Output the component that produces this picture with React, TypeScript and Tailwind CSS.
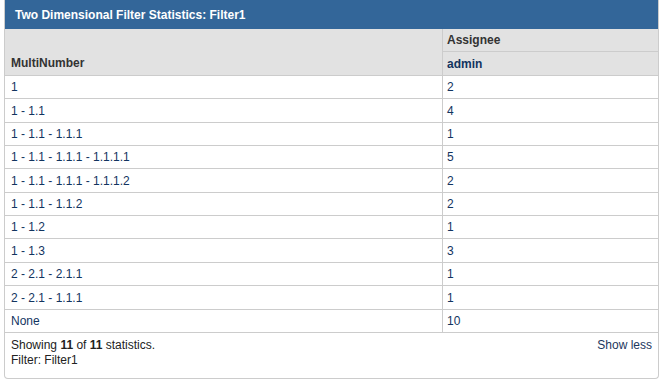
import React from 'react';

type Row = { path: string; count: number };

const rows: Row[] = [
    { path: '1', count: 2 },
    { path: '1 - 1.1', count: 4 },
    { path: '1 - 1.1 - 1.1.1', count: 1 },
    { path: '1 - 1.1 - 1.1.1 - 1.1.1.1', count: 5 },
    { path: '1 - 1.1 - 1.1.1 - 1.1.1.2', count: 2 },
    { path: '1 - 1.1 - 1.1.2', count: 2 },
    { path: '1 - 1.2', count: 1 },
    { path: '1 - 1.3', count: 3 },
    { path: '2 - 2.1 - 2.1.1', count: 1 },
    { path: '2 - 2.1 - 1.1.1', count: 1 },
    { path: 'None', count: 10 },
];

// row heights alternate so 11 rows land on the same lines as the screenshot
const rowHeights = ['h-[23px]', 'h-[24px]', 'h-[23px]', 'h-[23px]', 'h-[24px]', 'h-[23px]', 'h-[23px]', 'h-[24px]', 'h-[23px]', 'h-[24px]', 'h-[23px]'];

const App: React.FC = () => {
    return (
        <div className="w-[666px] h-[385px] bg-white pl-[4px] font-['Liberation_Sans',Arial,sans-serif] text-[12px]">
            <div className="w-[655px] h-[379px] border border-t-0 border-[#cccccc] rounded-b-[4px] flex flex-col overflow-hidden">
                {/* Title bar */}
                <div className="h-[29px] shrink-0 bg-[#336699] text-white font-bold px-[10px] flex items-center">
                    Two Dimensional Filter Statistics: Filter1
                </div>

                {/* Column headers */}
                <div className="flex bg-[#e2e2e2] text-[#333333] font-bold h-[46px] shrink-0">
                    <div className="w-[438px] flex items-end px-[6px] pb-[3px] border-r border-[#cccccc]">
                        MultiNumber
                    </div>
                    <div className="flex-1 flex flex-col">
                        <div className="h-[23px] flex items-center px-[4px] border-b border-[#cccccc]">Assignee</div>
                        <div className="flex-1 flex items-center px-[4px] text-[#12345f]">admin</div>
                    </div>
                </div>

                {/* Data rows */}
                <div className="flex flex-col text-[#12345f]">
                    {rows.map((row, i) => (
                        <div key={row.path} className={`${rowHeights[i]} flex border-t border-[#cccccc]`}>
                            <div className="w-[438px] flex items-center px-[6px] border-r border-[#cccccc]">{row.path}</div>
                            <div className="flex-1 flex items-center px-[4px]">{row.count}</div>
                        </div>
                    ))}
                </div>

                {/* Footer */}
                <div className="flex-1 border-t border-[#cccccc] flex justify-between px-[6px] pt-[5px] leading-[15px]">
                    <div className="text-[#222222]">
                        <div>
                            Showing <span className="font-bold">11</span> of <span className="font-bold">11</span> statistics.
                        </div>
                        <div>Filter: Filter1</div>
                    </div>
                    <div className="text-[#1b365d]">Show less</div>
                </div>
            </div>
        </div>
    );
};

export default App;
